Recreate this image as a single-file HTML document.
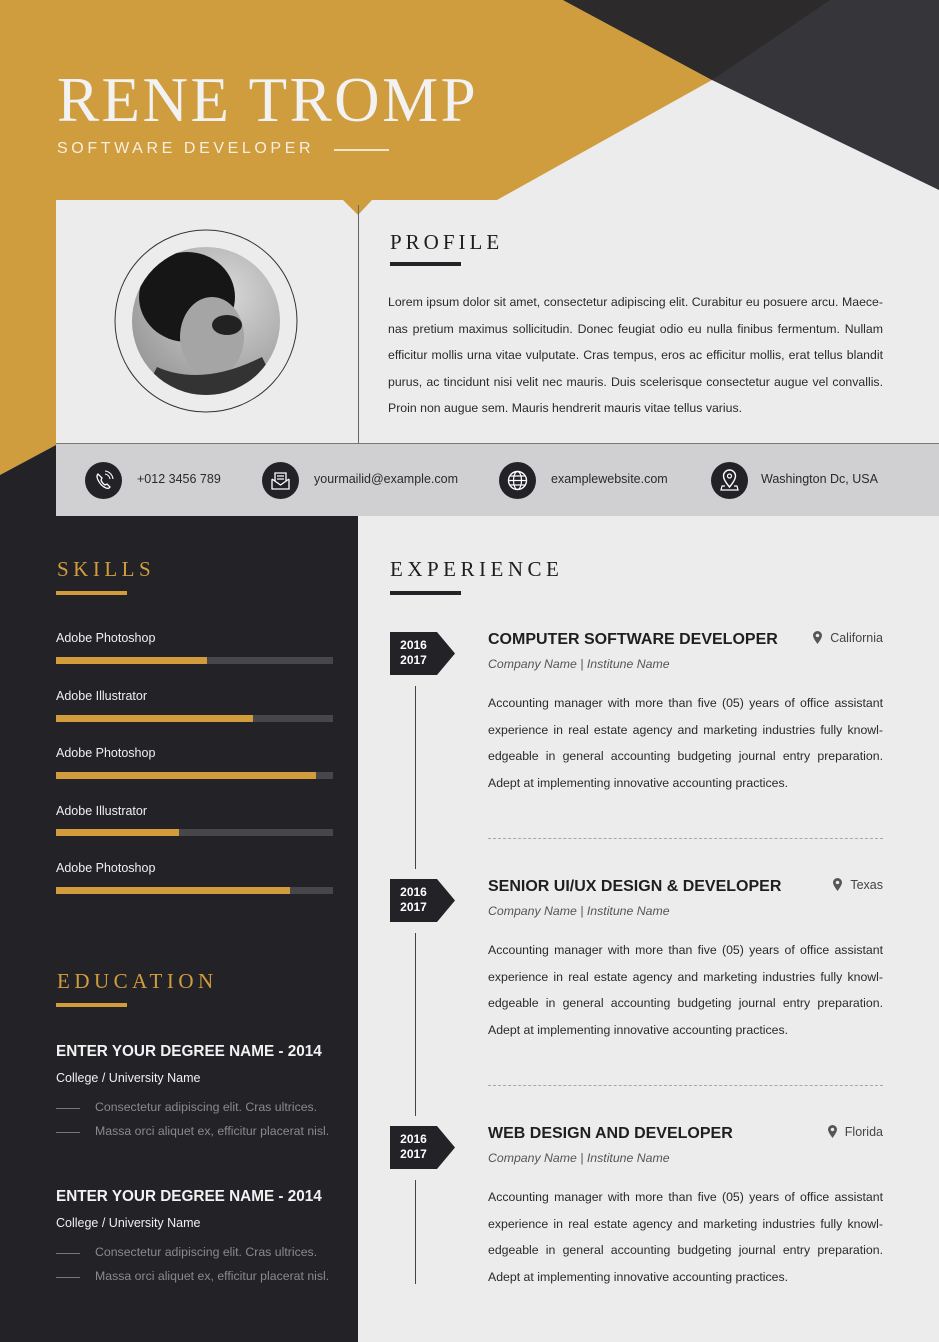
<!DOCTYPE html>
<html><head><meta charset="utf-8"><style>
*{margin:0;padding:0;box-sizing:border-box}
body{width:939px;height:1342px;position:relative;overflow:hidden;background:#ececec;font-family:"Liberation Sans",Arial,sans-serif}
.a{position:absolute;white-space:nowrap}
.serif{font-family:"Liberation Serif",serif}
.p{position:absolute;left:388px;width:495px;font-size:12.3px;line-height:26.6px;color:#2a2a2a;text-align:justify;text-align-last:left}
.sk{position:absolute;left:56px;font-size:12.5px;color:#f0f0f0}
.bar{position:absolute;left:56px;width:277px;height:7px;background:#46464b}
.bar i{position:absolute;left:0;top:0;height:7px;background:#d29c3c}
.deg{position:absolute;left:56px;font-size:15.3px;font-weight:bold;color:#f2f2f2}
.col{position:absolute;left:56px;font-size:12.5px;color:#f0f0f0}
.bl{position:absolute;left:56px;font-size:12.3px;color:#8a8a8e}
.bl:before{content:"";position:absolute;left:0;top:8px;width:24px;height:1px;background:#77777b}
.bl span{margin-left:39px}
.badge{position:absolute;left:390px;width:66px;height:43px}
.badge b{position:absolute;left:0;width:47px;text-align:center;color:#fff;font-size:12px;line-height:15px;top:6px}
.tl{position:absolute;left:415px;width:1px;background:#444}
.jt{position:absolute;left:488px;font-size:16px;font-weight:bold;color:#1f1f1f}
.cn{position:absolute;left:488px;font-size:12.3px;font-style:italic;color:#555}
.loc{position:absolute;right:56px;font-size:12.5px;color:#444}
.loc svg{vertical-align:-2px;margin-right:8px}
.jp{position:absolute;left:488px;width:395px;font-size:12.3px;line-height:26.6px;color:#2a2a2a;text-align:justify;text-align-last:left}
.dash{position:absolute;left:488px;width:395px;border-top:1px dashed #a8a8a8}
.ct{position:absolute;top:472px;font-size:12.5px;color:#2a2a2a}
.ic{position:absolute;top:462px;width:37px;height:37px;border-radius:50%;background:#232327}
</style></head><body>
<svg class="a" style="left:0;top:0" width="939" height="520">
<polygon points="0,0 563,0 712,80 497,200 0,200" fill="#cf9c3e"/>
<polygon points="563,0 939,0 939,190 712,80" fill="#35353a"/>
<polygon points="563,0 830,0 712,80" fill="#2c2a2b"/>
<polygon points="0,200 56,200 56,445 0,475" fill="#cf9c3e"/>
<polygon points="0,475 56,445 56,520 0,520" fill="#232327"/>
<rect x="56" y="200" width="883" height="243" fill="#ececec"/>
<polygon points="343,200 372,200 358,215" fill="#cf9c3e"/>
<line x1="358.5" y1="205" x2="358.5" y2="443" stroke="#666" stroke-width="1"/>
<rect x="56" y="443" width="883" height="73" fill="#d0d0d2"/>
<line x1="56" y1="443.5" x2="939" y2="443.5" stroke="#777" stroke-width="1"/>
</svg>
<div class="a" style="left:0;top:516px;width:358px;height:826px;background:#232327"></div>

<div class="a serif" style="left:57px;top:63px;font-size:63px;letter-spacing:2.5px;color:#f2f2f2;line-height:74px">RENE TROMP</div>
<div class="a" style="left:57px;top:140px;font-size:16px;letter-spacing:3.6px;color:#f6efe0">SOFTWARE DEVELOPER</div>
<div class="a" style="left:334px;top:149px;width:55px;height:2px;background:#f2e6cc"></div>

<svg class="a" style="left:112px;top:227px" width="188" height="190">
<defs><clipPath id="c"><circle cx="94" cy="94" r="74"/></clipPath>
<radialGradient id="g" cx="0.6" cy="0.35" r="0.7"><stop offset="0" stop-color="#d8d8d8"/><stop offset="1" stop-color="#8a8a8a"/></radialGradient></defs>
<circle cx="94" cy="94" r="91" fill="none" stroke="#333" stroke-width="1"/>
<g clip-path="url(#c)"><rect width="188" height="190" fill="url(#g)"/>
<ellipse cx="75" cy="70" rx="48" ry="45" fill="#161616"/>
<ellipse cx="100" cy="110" rx="32" ry="40" fill="#a5a5a5"/>
<ellipse cx="115" cy="98" rx="15" ry="10" fill="#222"/>
<path d="M20 190 L45 140 Q90 160 150 130 L180 190Z" fill="#333"/></g>
</svg>

<div class="a serif" style="left:390px;top:230px;font-size:21px;letter-spacing:4px;color:#1e1e1e">PROFILE</div>
<div class="a" style="left:390px;top:262px;width:71px;height:4px;background:#232327"></div>
<div class="p" style="top:289px">Lorem ipsum dolor sit amet, consectetur adipiscing elit. Curabitur eu posuere arcu. Maece-nas pretium maximus sollicitudin. Donec feugiat odio eu nulla finibus fermentum. Nullam efficitur mollis urna vitae vulputate. Cras tempus, eros ac efficitur mollis, erat tellus blandit purus, ac tincidunt nisi velit nec mauris. Duis scelerisque consectetur augue vel convallis. Proin non augue sem. Mauris hendrerit mauris vitae tellus varius.</div>

<div class="ic" style="left:85px"><svg width="37" height="37"><path d="M13 12 q-2 2 0 6 q3 6 8 8 q3 1 4-1 l-3-3 -2 1 q-3-2-4-5 l1-2z" fill="none" stroke="#fff" stroke-width="1.3"/><path d="M20 12 a6 6 0 0 1 5 5 M20 9 a9 9 0 0 1 8 8" fill="none" stroke="#fff" stroke-width="1.1"/></svg></div>
<div class="ct" style="left:137px">+012 3456 789</div>
<div class="ic" style="left:262px"><svg width="37" height="37"><path d="M10 17 v10 h17 v-10 M10 17 l8.5 6 l8.5-6 M13 19 v-8 h11 v8 M15 14 h7 M15 17 h7" fill="none" stroke="#fff" stroke-width="1.3"/></svg></div>
<div class="ct" style="left:314px">yourmailid@example.com</div>
<div class="ic" style="left:499px"><svg width="37" height="37"><circle cx="18.5" cy="18.5" r="9" fill="none" stroke="#fff" stroke-width="1.4"/><ellipse cx="18.5" cy="18.5" rx="4" ry="9" fill="none" stroke="#fff" stroke-width="1.2"/><path d="M9.5 18.5h18 M11 14h15 M11 23h15" stroke="#fff" stroke-width="1.2"/></svg></div>
<div class="ct" style="left:551px">examplewebsite.com</div>
<div class="ic" style="left:711px"><svg width="37" height="37"><path d="M18.5 25 q-6-7-6-11 a6 6 0 0 1 12 0 q0 4-6 11z" fill="none" stroke="#fff" stroke-width="1.4"/><circle cx="18.5" cy="14" r="2" fill="none" stroke="#fff" stroke-width="1.2"/><path d="M14 24 h-3 l-1 4 h17 l-1-4 h-3" fill="none" stroke="#fff" stroke-width="1.2"/></svg></div>
<div class="ct" style="left:761px">Washington Dc, USA</div>

<div class="a serif" style="left:57px;top:557px;font-size:21px;letter-spacing:4.5px;color:#d29c3c">SKILLS</div>
<div class="a" style="left:56px;top:591px;width:71px;height:4px;background:#d29c3c"></div>
<div class="sk" style="top:631px">Adobe Photoshop</div><div class="bar" style="top:657px"><i style="width:151px"></i></div>
<div class="sk" style="top:689px">Adobe Illustrator</div><div class="bar" style="top:715px"><i style="width:197px"></i></div>
<div class="sk" style="top:746px">Adobe Photoshop</div><div class="bar" style="top:772px"><i style="width:260px"></i></div>
<div class="sk" style="top:804px">Adobe Illustrator</div><div class="bar" style="top:829px"><i style="width:123px"></i></div>
<div class="sk" style="top:861px">Adobe Photoshop</div><div class="bar" style="top:887px"><i style="width:234px"></i></div>

<div class="a serif" style="left:57px;top:969px;font-size:21px;letter-spacing:4.5px;color:#d29c3c">EDUCATION</div>
<div class="a" style="left:56px;top:1003px;width:71px;height:4px;background:#d29c3c"></div>
<div class="deg" style="top:1043px">ENTER YOUR DEGREE NAME - 2014</div>
<div class="col" style="top:1071px">College / University Name</div>
<div class="bl" style="top:1100px"><span>Consectetur adipiscing elit. Cras ultrices.</span></div>
<div class="bl" style="top:1124px"><span>Massa orci aliquet ex, efficitur placerat nisl.</span></div>
<div class="deg" style="top:1188px">ENTER YOUR DEGREE NAME - 2014</div>
<div class="col" style="top:1216px">College / University Name</div>
<div class="bl" style="top:1245px"><span>Consectetur adipiscing elit. Cras ultrices.</span></div>
<div class="bl" style="top:1269px"><span>Massa orci aliquet ex, efficitur placerat nisl.</span></div>

<div class="a serif" style="left:390px;top:557px;font-size:21px;letter-spacing:4.5px;color:#1e1e1e">EXPERIENCE</div>
<div class="a" style="left:390px;top:591px;width:71px;height:4px;background:#232327"></div>

<div class="tl" style="top:686px;height:183px"></div>
<div class="tl" style="top:933px;height:183px"></div>
<div class="tl" style="top:1180px;height:104px"></div>

<div class="badge" style="top:632px"><svg width="66" height="43" class="a"><polygon points="0,0 47,0 65,21.5 47,43 0,43" fill="#232327"/></svg><b>2016<br>2017</b></div>
<div class="jt" style="top:631px">COMPUTER SOFTWARE DEVELOPER</div>
<div class="loc" style="top:631px"><svg width="9" height="13"><path d="M4.5 13 Q0 7 0 4.5 a4.5 4.5 0 0 1 9 0 Q9 7 4.5 13z M4.5 2.7 a1.8 1.8 0 1 0 0.01 0z" fill="#555" fill-rule="evenodd"/></svg>California</div>
<div class="cn" style="top:657px">Company Name | Institune Name</div>
<div class="jp" style="top:690px">Accounting manager with more than five (05) years of office assistant experience in real estate agency and marketing industries fully knowl-edgeable in general accounting budgeting journal entry preparation. Adept at implementing innovative accounting practices.</div>
<div class="dash" style="top:838px"></div>

<div class="badge" style="top:879px"><svg width="66" height="43" class="a"><polygon points="0,0 47,0 65,21.5 47,43 0,43" fill="#232327"/></svg><b>2016<br>2017</b></div>
<div class="jt" style="top:878px">SENIOR UI/UX DESIGN &amp; DEVELOPER</div>
<div class="loc" style="top:878px"><svg width="9" height="13"><path d="M4.5 13 Q0 7 0 4.5 a4.5 4.5 0 0 1 9 0 Q9 7 4.5 13z M4.5 2.7 a1.8 1.8 0 1 0 0.01 0z" fill="#555" fill-rule="evenodd"/></svg>Texas</div>
<div class="cn" style="top:904px">Company Name | Institune Name</div>
<div class="jp" style="top:937px">Accounting manager with more than five (05) years of office assistant experience in real estate agency and marketing industries fully knowl-edgeable in general accounting budgeting journal entry preparation. Adept at implementing innovative accounting practices.</div>
<div class="dash" style="top:1085px"></div>

<div class="badge" style="top:1126px"><svg width="66" height="43" class="a"><polygon points="0,0 47,0 65,21.5 47,43 0,43" fill="#232327"/></svg><b>2016<br>2017</b></div>
<div class="jt" style="top:1125px">WEB DESIGN AND DEVELOPER</div>
<div class="loc" style="top:1125px"><svg width="9" height="13"><path d="M4.5 13 Q0 7 0 4.5 a4.5 4.5 0 0 1 9 0 Q9 7 4.5 13z M4.5 2.7 a1.8 1.8 0 1 0 0.01 0z" fill="#555" fill-rule="evenodd"/></svg>Florida</div>
<div class="cn" style="top:1151px">Company Name | Institune Name</div>
<div class="jp" style="top:1184px">Accounting manager with more than five (05) years of office assistant experience in real estate agency and marketing industries fully knowl-edgeable in general accounting budgeting journal entry preparation. Adept at implementing innovative accounting practices.</div>
</body></html>
